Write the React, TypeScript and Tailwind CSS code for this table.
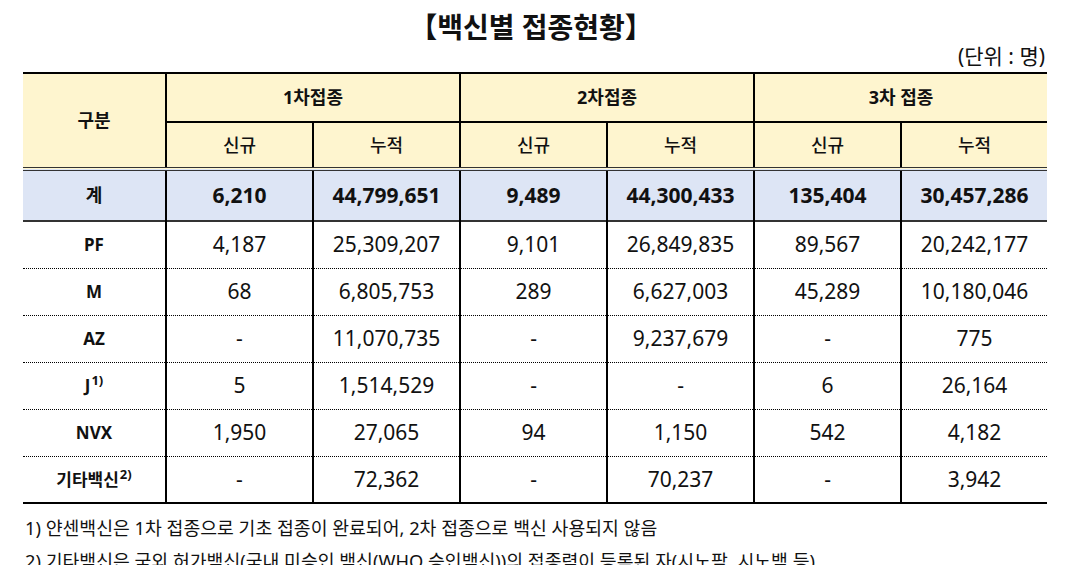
const colunas = ["1차접종", "2차접종", "3차 접종"];

type Linha = {
  nome: string;
  nota?: string;
  valores: string[];
};

const total = ["6,210", "44,799,651", "9,489", "44,300,433", "135,404", "30,457,286"];

const linhas: Linha[] = [
  { nome: "PF", valores: ["4,187", "25,309,207", "9,101", "26,849,835", "89,567", "20,242,177"] },
  { nome: "M", valores: ["68", "6,805,753", "289", "6,627,003", "45,289", "10,180,046"] },
  { nome: "AZ", valores: ["-", "11,070,735", "-", "9,237,679", "-", "775"] },
  { nome: "J", nota: "1)", valores: ["5", "1,514,529", "-", "-", "6", "26,164"] },
  { nome: "NVX", valores: ["1,950", "27,065", "94", "1,150", "542", "4,182"] },
  { nome: "기타백신", nota: "2)", valores: ["-", "72,362", "-", "70,237", "-", "3,942"] },
];

function App() {
  return (
    <div
      className="w-[1080px] h-[565px] overflow-hidden bg-white text-[#111]"
      style={{ fontFamily: '"Noto Sans", "Noto Sans CJK KR", sans-serif' }}
    >
      <div className="px-[23px] pt-[7px] w-[1070px]">
        <h1 className="text-center text-[28px] font-bold leading-[40px] pr-[8px]">
          【백신별 접종현황】
        </h1>
        <p className="text-right text-[21px] leading-[26px] pr-[2px] -mt-[4px]">(단위 : 명)</p>

        <table className="w-[1024px] table-fixed border-collapse mt-[3px] border-t-2 border-b-2 border-black">
          <colgroup>
            <col className="w-[143px]" />
            <col className="w-[147px]" />
            <col className="w-[147px]" />
            <col className="w-[147px]" />
            <col className="w-[147px]" />
            <col className="w-[147px]" />
            <col className="w-[146px]" />
          </colgroup>
          <thead className="bg-[#fef5cf]">
            <tr className="h-[49px]">
              <th rowSpan={2} className="text-[18px] font-bold border-r-2 border-black border-b-4 border-b-[#333] border-double">
                구분
              </th>
              {colunas.map((c, i) => (
                <th
                  key={c}
                  colSpan={2}
                  className={
                    "text-[18px] font-bold border-b-2 border-black " +
                    (i < 2 ? "border-r-2" : "")
                  }
                >
                  {c}
                </th>
              ))}
            </tr>
            <tr className="h-[47px]">
              {[0, 1, 2, 3, 4, 5].map((i) => (
                <th
                  key={i}
                  className={
                    "text-[18px] font-medium border-black border-b-4 border-b-[#333] border-double " +
                    (i < 5 ? "border-r-2" : "")
                  }
                >
                  {i % 2 === 0 ? "신규" : "누적"}
                </th>
              ))}
            </tr>
          </thead>
          <tbody>
            <tr className="h-[52px] bg-[#dde5f5] border-b-2 border-[#333]">
              <td className="text-center text-[18px] font-bold border-r-2 border-black">계</td>
              {total.map((v, i) => (
                <td
                  key={i}
                  className={
                    "text-center text-[21px] font-bold border-black " + (i < 5 ? "border-r-2" : "")
                  }
                >
                  {v}
                </td>
              ))}
            </tr>
            {linhas.map((l, idx) => (
              <tr
                key={l.nome}
                className={
                  "h-[47px] " +
                  (idx < linhas.length - 1 ? "border-b border-dotted border-black" : "")
                }
              >
                <td className="text-center text-[17px] font-bold border-r-2 border-black border-solid">
                  {l.nome}
                  {l.nota && (
                    <sup className="text-[13px] font-bold ml-[1px] -top-[7px] relative align-baseline">
                      {l.nota}
                    </sup>
                  )}
                </td>
                {l.valores.map((v, i) => (
                  <td
                    key={i}
                    className={
                      "text-center text-[21px] border-black border-solid " +
                      (i < 5 ? "border-r-2" : "")
                    }
                  >
                    {v}
                  </td>
                ))}
              </tr>
            ))}
          </tbody>
        </table>

        <div className="text-[18.3px] leading-[33px] pl-[2px] mt-[7px]">
          <p>1) 얀센백신은 1차 접종으로 기초 접종이 완료되어, 2차 접종으로 백신 사용되지 않음</p>
          <p>2) 기타백신은 국외 허가백신(국내 미승인 백신(WHO 승인백신))의 접종력이 등록된 자(시노팜, 시노백 등)</p>
        </div>
      </div>
    </div>
  );
}

export default App;
